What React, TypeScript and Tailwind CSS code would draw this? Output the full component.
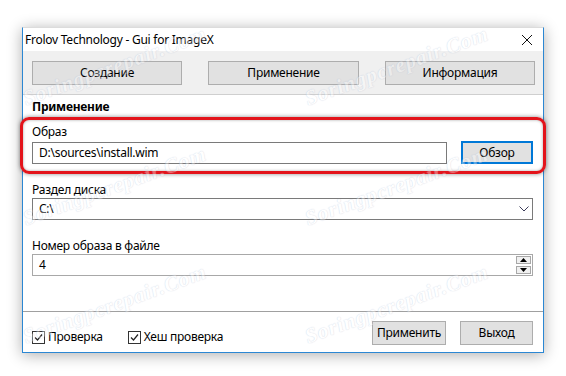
import React from "react";

const marks = [
  { l: 24, t: 84 },
  { l: 306, t: 84 },
  { l: 24, t: 204 },
  { l: 306, t: 204 },
  { l: 24, t: 322 },
  { l: 306, t: 322 },
];

function Btn({ children, w, extra = "" }: { children: React.ReactNode; w: string; extra?: string }) {
  return (
    <div className={`${w} h-[24px] flex items-center justify-center bg-[#e1e1e1] border border-[#adadad] ${extra}`}>
      {children}
    </div>
  );
}

function Check({ label }: { label: string }) {
  return (
    <div className="flex items-center">
      <div className="w-[13px] h-[13px] border border-[#333333] bg-white flex items-center justify-center">
        <svg width="11" height="11" viewBox="0 0 11 11">
          <path d="M2 5.5 L4.5 8 L9 2.5" stroke="#222" strokeWidth="1.2" fill="none" />
        </svg>
      </div>
      <span className="ml-[3px] leading-[16px]">{label}</span>
    </div>
  );
}

export default function App() {
  return (
    <div className="relative w-[566px] h-[376px] overflow-hidden bg-white pt-[27px] pl-[22px] font-['Noto_Sans',sans-serif] text-[12px] tracking-[-0.25px] text-black">
      <div className="w-[522px] h-[326px] flex flex-col bg-white border border-[#2b87d3] border-t-[#dcdcdc] shadow-[0_2px_14px_rgba(0,0,0,0.32)]">
        {/* title bar */}
        <div className="h-[23px] flex items-center justify-between pl-[2px] pr-[10px] shrink-0">
          <span className="leading-[16px]">Frolov Technology - Gui for ImageX</span>
          <svg width="12" height="12" viewBox="0 0 12 12">
            <path d="M1 1 L11 11 M11 1 L1 11" stroke="#111" strokeWidth="1" fill="none" />
          </svg>
        </div>
        {/* tab buttons */}
        <div className="h-[44px] shrink-0 bg-[#f0f0f0] border-b border-[#cfcfcf] flex items-center justify-between pl-[9px] pr-[8px]">
          <Btn w="w-[150px]">Создание</Btn>
          <Btn w="w-[151px]">Применение</Btn>
          <Btn w="w-[150px]">Информация</Btn>
        </div>
        {/* content */}
        <div className="flex-1 flex flex-col pl-[9px] pr-[10px]">
          <div className="mt-[4px] leading-[16px] font-bold">Применение</div>
          <div className="mt-[9px] leading-[16px]">Образ</div>
          <div className="mt-[1px] flex items-center justify-between">
            <div className="w-[415px] h-[22px] border border-[#7a7a7a] flex items-center pl-[6px]">
              D:\sources\install.wim
            </div>
            <div className="w-[72px] h-[23px] flex items-center justify-center bg-[#e1e1e1] border-2 border-[#0078d7]">
              Обзор
            </div>
          </div>
          <div className="mt-[18px] leading-[16px]">Раздел диска</div>
          <div className="h-[22px] border border-[#7a7a7a] flex items-center justify-between pl-[6px] pr-[3px]">
            <span>C:\</span>
            <svg width="10" height="6" viewBox="0 0 10 6">
              <path d="M0.5 0.5 L5 5 L9.5 0.5" stroke="#3c3c5a" strokeWidth="1" fill="none" />
            </svg>
          </div>
          <div className="mt-[18px] leading-[16px]">Номер образа в файле</div>
          <div className="h-[22px] border border-[#a8a8a8] flex items-center justify-between pl-[6px] pr-[1px]">
            <span>4</span>
            <div className="flex flex-col gap-[2px]">
              <div className="w-[15px] h-[8px] bg-[#f0f0f0] border border-[#a8a8a8] flex items-center justify-center">
                <svg width="7" height="4" viewBox="0 0 7 4"><path d="M0 4 L3.5 0 L7 4 Z" fill="#000" /></svg>
              </div>
              <div className="w-[15px] h-[8px] bg-[#f0f0f0] border border-[#a8a8a8] flex items-center justify-center">
                <svg width="7" height="4" viewBox="0 0 7 4"><path d="M0 0 L7 0 L3.5 4 Z" fill="#000" /></svg>
              </div>
            </div>
          </div>
        </div>
        {/* bottom */}
        <div className="h-[41px] shrink-0 border-t border-[#a0a0a0] flex items-start pl-[9px] pr-[10px]">
          <div className="mt-[17px] flex items-center gap-[25px]">
            <Check label="Проверка" />
            <Check label="Хеш проверка" />
          </div>
          <div className="ml-auto mt-[9px] flex gap-[14px]">
            <Btn w="w-[74px]" extra="h-[23px]">Применить</Btn>
            <Btn w="w-[73px]" extra="h-[23px]">Выход</Btn>
          </div>
        </div>
      </div>

      {/* red annotation */}
      <div className="absolute left-[20px] top-[117px] w-[526px] h-[57px] rounded-[9px] border-[3px] border-[#e3141b] shadow-[0_0_4px_rgba(0,0,0,0.45),inset_0_0_3px_rgba(0,0,0,0.35)] pointer-events-none" />

      {/* watermark */}
      {marks.map((m, i) => (
        <div
          key={i}
          className="absolute pointer-events-none -rotate-[20deg] origin-left font-['Liberation_Serif',serif] italic font-bold text-[21px] tracking-[1px] text-white [text-shadow:0_0_1px_#9aa8c8,0_0_1px_#9aa8c8] opacity-35"
          style={{ left: m.l, top: m.t }}
        >
          Soringpcrepair.Com
        </div>
      ))}
    </div>
  );
}
